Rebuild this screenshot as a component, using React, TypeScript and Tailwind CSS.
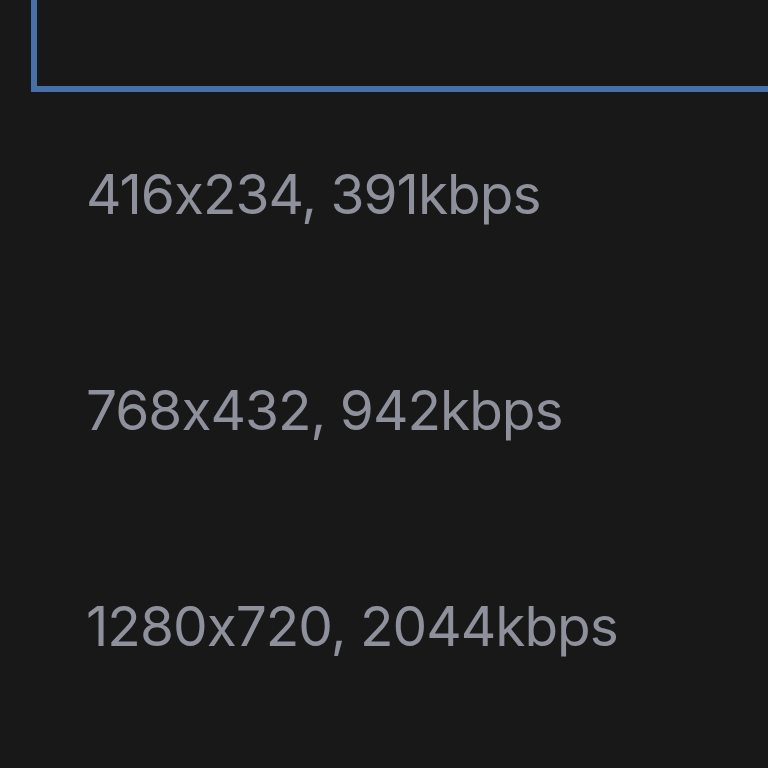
export default function App() {
  const rows = ["416x234, 391kbps", "768x432, 942kbps", "1280x720, 2044kbps"];
  return (
    <div className="w-[768px] h-[768px] overflow-hidden bg-[#181818]" style={{ fontFamily: "Inter, 'Noto Sans', sans-serif" }}>
      <div className="-mt-[124px] flex flex-col">
        <div className="ml-[31px] w-[800px] h-[216px] border-[6px] border-[#4770a8] flex items-end">
          <span className="ml-[58px] mb-[82px] text-[55px] leading-none text-[#2c2c30]">256x144</span>
        </div>
        {rows.map((r) => (
          <div key={r} className="h-[216px] flex items-center pl-[86px]">
            <span className="text-[55px] leading-none tracking-[-1px] text-[#8e909c] pb-[12px]">{r}</span>
          </div>
        ))}
      </div>
    </div>
  );
}
